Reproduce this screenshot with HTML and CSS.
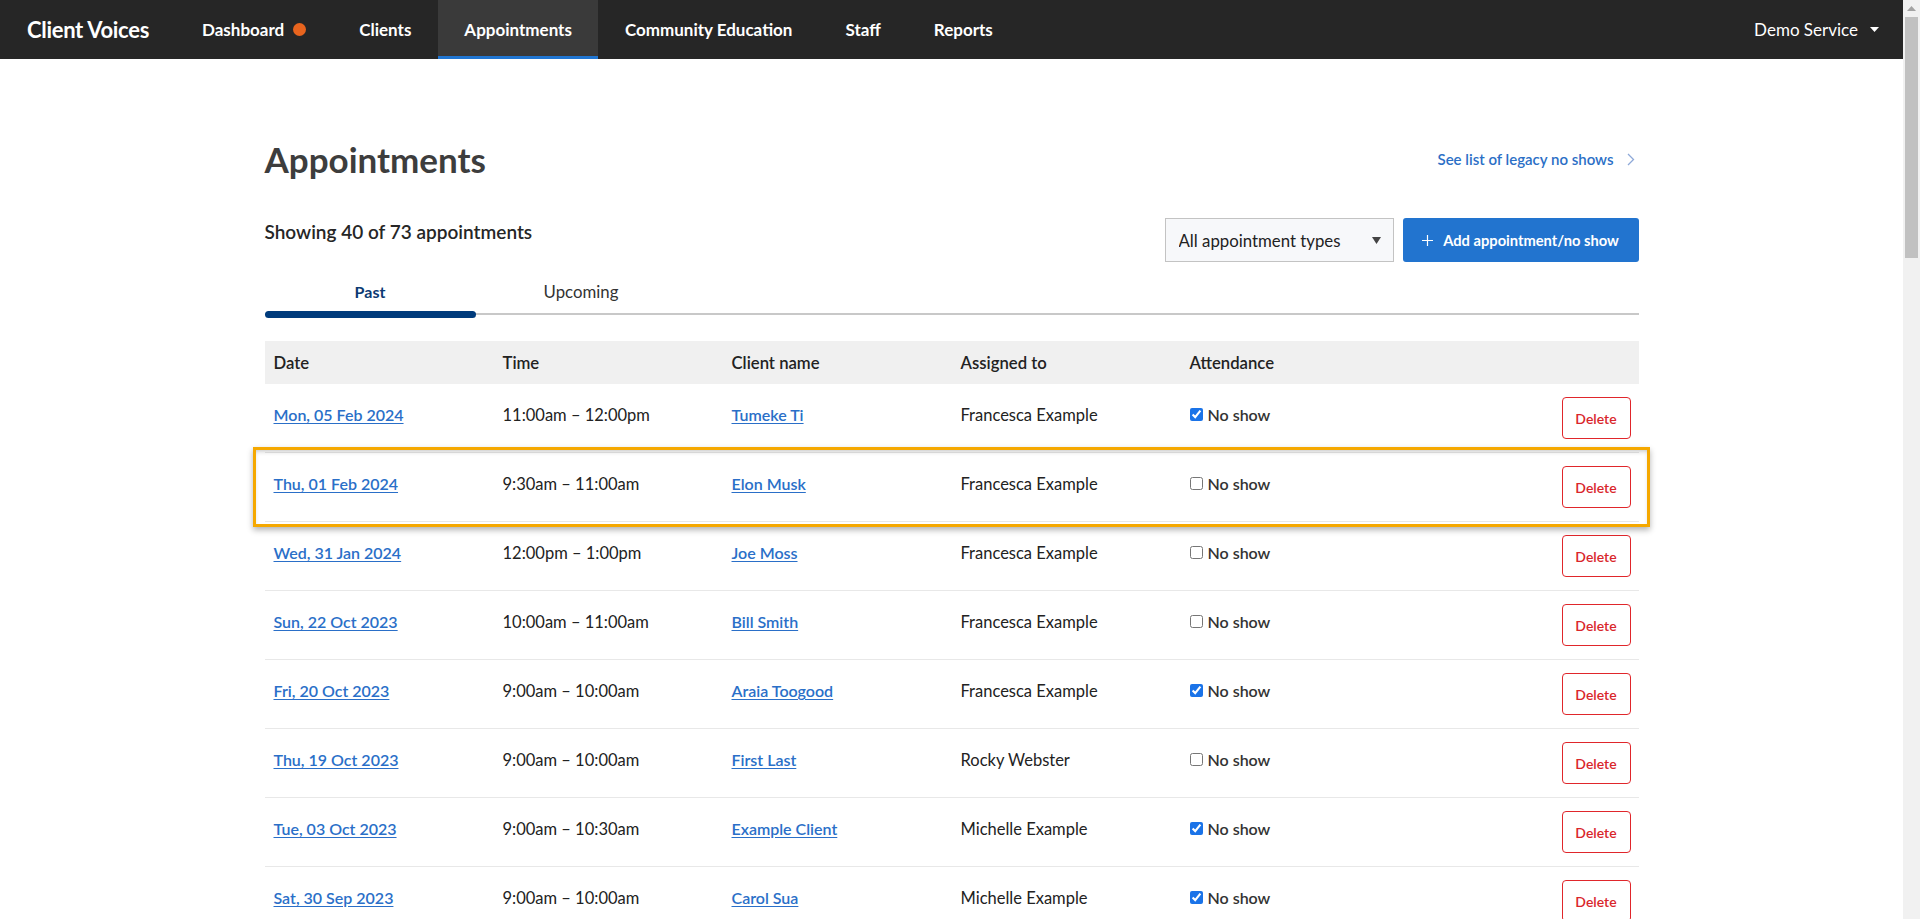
FILE: index.html
```html
<!DOCTYPE html>
<html lang="en">
<head>
<meta charset="utf-8">
<title>Appointments - Client Voices</title>
<link rel="stylesheet" href="styles.css">
</head>
<body>
<header class="topnav">
  <a class="brand" href="#">Client Voices</a>
  <nav class="nav-items">
    <a class="nav-item" href="#">Dashboard <span class="dot"></span></a>
    <a class="nav-item" href="#">Clients</a>
    <a class="nav-item active" href="#">Appointments</a>
    <a class="nav-item" href="#">Community Education</a>
    <a class="nav-item" href="#">Staff</a>
    <a class="nav-item" href="#">Reports</a>
  </nav>
  <a class="account" href="#">Demo Service
    <svg class="caret" width="9" height="5" viewBox="0 0 9 5"><path d="M0 0h9L4.5 5z" fill="#fff"/></svg>
  </a>
</header>

<main class="page">
  <div class="page-head">
    <h1>Appointments</h1>
    <a class="legacy-link" href="#">See list of legacy no shows
      <svg class="chev" width="8" height="13" viewBox="0 0 8 13"><path d="M1 1l5.5 5.5L1 12" fill="none" stroke="#8ea9d8" stroke-width="1.3"/></svg>
    </a>
  </div>

  <div class="toolbar">
    <p class="count">Showing 40 of 73 appointments</p>
    <div class="actions">
      <div class="select-wrap">
        <select class="type-select">
          <option>All appointment types</option>
        </select>
        <svg class="select-arrow" width="9" height="7" viewBox="0 0 9 7"><path d="M0 0h9L4.5 7z" fill="#444"/></svg>
      </div>
      <button class="btn-primary" type="button">
        <svg width="11" height="11" viewBox="0 0 11 11"><path d="M5.5 0v11M0 5.5h11" stroke="#fff" stroke-width="1.2"/></svg>
        Add appointment/no show
      </button>
    </div>
  </div>

  <div class="tabs">
    <a class="tab active" href="#">Past</a>
    <a class="tab" href="#">Upcoming</a>
  </div>

  <div class="table-wrap">
    <table class="appts">
      <thead>
        <tr><th>Date</th><th>Time</th><th>Client name</th><th>Assigned to</th><th>Attendance</th><th></th></tr>
      </thead>
      <tbody>
        <tr><td class="t"><a href="#">Mon, 05 Feb 2024</a></td><td class="t">11:00am – 12:00pm</td><td class="t"><a href="#">Tumeke Ti</a></td><td class="t">Francesca Example</td><td class="t"><label class="ns"><input type="checkbox" checked> No show</label></td><td class="act"><button class="btn-del" type="button">Delete</button></td></tr>
        <tr><td class="t"><a href="#">Thu, 01 Feb 2024</a></td><td class="t">9:30am – 11:00am</td><td class="t"><a href="#">Elon Musk</a></td><td class="t">Francesca Example</td><td class="t"><label class="ns"><input type="checkbox"> No show</label></td><td class="act"><button class="btn-del" type="button">Delete</button></td></tr>
        <tr><td class="t"><a href="#">Wed, 31 Jan 2024</a></td><td class="t">12:00pm – 1:00pm</td><td class="t"><a href="#">Joe Moss</a></td><td class="t">Francesca Example</td><td class="t"><label class="ns"><input type="checkbox"> No show</label></td><td class="act"><button class="btn-del" type="button">Delete</button></td></tr>
        <tr><td class="t"><a href="#">Sun, 22 Oct 2023</a></td><td class="t">10:00am – 11:00am</td><td class="t"><a href="#">Bill Smith</a></td><td class="t">Francesca Example</td><td class="t"><label class="ns"><input type="checkbox"> No show</label></td><td class="act"><button class="btn-del" type="button">Delete</button></td></tr>
        <tr><td class="t"><a href="#">Fri, 20 Oct 2023</a></td><td class="t">9:00am – 10:00am</td><td class="t"><a href="#">Araia Toogood</a></td><td class="t">Francesca Example</td><td class="t"><label class="ns"><input type="checkbox" checked> No show</label></td><td class="act"><button class="btn-del" type="button">Delete</button></td></tr>
        <tr><td class="t"><a href="#">Thu, 19 Oct 2023</a></td><td class="t">9:00am – 10:00am</td><td class="t"><a href="#">First Last</a></td><td class="t">Rocky Webster</td><td class="t"><label class="ns"><input type="checkbox"> No show</label></td><td class="act"><button class="btn-del" type="button">Delete</button></td></tr>
        <tr><td class="t"><a href="#">Tue, 03 Oct 2023</a></td><td class="t">9:00am – 10:30am</td><td class="t"><a href="#">Example Client</a></td><td class="t">Michelle Example</td><td class="t"><label class="ns"><input type="checkbox" checked> No show</label></td><td class="act"><button class="btn-del" type="button">Delete</button></td></tr>
        <tr><td class="t"><a href="#">Sat, 30 Sep 2023</a></td><td class="t">9:00am – 10:00am</td><td class="t"><a href="#">Carol Sua</a></td><td class="t">Michelle Example</td><td class="t"><label class="ns"><input type="checkbox" checked> No show</label></td><td class="act"><button class="btn-del" type="button">Delete</button></td></tr>
      </tbody>
    </table>
    <div class="row-highlight"></div>
  </div>
</main>

<div class="scrollbar" aria-hidden="true">
  <div class="sb-btn"><svg width="9" height="5" viewBox="0 0 9 5"><path d="M0 5L4.5 0 9 5z" fill="#a3a3a3"/></svg></div>
  <div class="sb-thumb"></div>
</div>
</body>
</html>
```

FILE: styles.css
```css
html, body {
  margin: 0;
  padding: 0;
}
body {
  font-family: Lato, "Liberation Sans", sans-serif;
  color: #222;
  background: #fff;
  padding-right: 17px;
  height: 919px;
  overflow: hidden;
}
a { text-decoration: none; }

/* Fake classic scrollbar (browser chrome in the reference) */
.scrollbar {
  position: fixed;
  top: 0;
  right: 0;
  bottom: 0;
  width: 17px;
  background: #f1f1f1;
  display: flex;
  flex-direction: column;
}
.sb-btn {
  height: 17px;
  display: flex;
  align-items: center;
  justify-content: center;
}
.sb-thumb {
  height: 241px;
  margin: 0 2px;
  background: #c1c1c1;
}

/* Top navigation */
.topnav {
  display: flex;
  align-items: stretch;
  height: 59px;
  background: #262626;
  padding-left: 27px;
  padding-right: 24px;
}
.brand {
  display: flex;
  align-items: center;
  color: #fff;
  font-size: 22px;
  font-weight: 700;
  margin-right: 27px;
  letter-spacing: -0.3px;
}
.nav-items {
  display: flex;
  align-items: stretch;
}
.nav-item {
  display: flex;
  align-items: center;
  padding: 3px 26.5px 0;
  color: #fff;
  font-size: 17px;
  font-weight: 700;
  box-sizing: border-box;
  border-bottom: 3px solid transparent;
}
.nav-item:first-child { padding-left: 26px; }
.nav-item.active {
  background: #3a3a3a;
  border-bottom-color: #2176d2;
}
.dot {
  display: inline-block;
  width: 13px;
  height: 13px;
  border-radius: 50%;
  background: #e8641e;
  margin-left: 9px;
}
.account {
  margin-left: auto;
  display: flex;
  align-items: center;
  color: #fff;
  font-size: 17px;
}
.caret { margin-left: 12px; }

/* Page */
.page {
  width: 1374px;
  margin: 0 auto;
  padding-top: 78px;
  padding-bottom: 100px;
}
.page-head {
  display: flex;
  justify-content: space-between;
  align-items: center;
}
h1 {
  margin: 0;
  font-size: 35px;
  line-height: 44px;
  font-weight: 700;
  color: #3d3d3d;
}
.legacy-link {
  display: flex;
  align-items: center;
  gap: 13px;
  color: #2b6fc6;
  font-size: 15px;
  font-weight: 600;
  margin-right: 4px;
}
.toolbar {
  display: flex;
  justify-content: space-between;
  align-items: flex-start;
  margin-top: 37px;
}
.count {
  margin: 2px 0 0;
  font-size: 19px;
  line-height: 24px;
  font-weight: 600;
  color: #262626;
}
.actions {
  display: flex;
  gap: 9px;
}
.select-wrap {
  position: relative;
}
.type-select {
  -webkit-appearance: none;
  appearance: none;
  width: 229px;
  height: 44px;
  box-sizing: border-box;
  border: 1px solid #c3c3c3;
  border-radius: 0;
  background: #f7f8fa;
  padding: 0 30px 0 13px;
  font-family: Lato, "Liberation Sans", sans-serif;
  font-size: 16.8px;
  color: #222;
}
.select-arrow {
  position: absolute;
  right: 13px;
  top: 19px;
  pointer-events: none;
}
.btn-primary {
  display: flex;
  align-items: center;
  gap: 10px;
  height: 44px;
  width: 236px;
  justify-content: center;
  border: 0;
  border-radius: 3px;
  background: #2274cf;
  color: #fff;
  font-family: Lato, "Liberation Sans", sans-serif;
  font-size: 14.7px;
  font-weight: 700;
}

/* Tabs */
.tabs {
  display: flex;
  margin-top: 18px;
  border-bottom: 2px solid #c8c8c8;
}
.tab {
  position: relative;
  width: 211px;
  text-align: center;
  font-size: 16.8px;
  line-height: 22px;
  padding: 1px 0 10px;
  color: #333;
}
.tab.active {
  color: #0c3a73;
  font-weight: 700;
  font-size: 16px;
}
.tab.active::after {
  content: "";
  position: absolute;
  left: 0;
  right: 0;
  bottom: -5px;
  height: 7px;
  border-radius: 4px;
  background: #003b7c;
}

/* Table */
.table-wrap {
  position: relative;
  margin-top: 26px;
}
.appts {
  width: 100%;
  table-layout: fixed;
  border-collapse: separate;
  border-spacing: 0;
}
.appts th {
  height: 43px;
  padding: 0 9px;
  background: #f0f0f0;
  text-align: left;
  font-size: 16.7px;
  font-weight: 600;
  color: #222;
  vertical-align: middle;
}
.appts td {
  border-bottom: 1px solid #e8e8e8;
  padding: 0 9px;
  font-size: 16.5px;
  color: #222;
  vertical-align: middle;
}
.appts td.t {
  height: 62px;
  padding-bottom: 6px;
}
.appts td.act {
  height: 68px;
  text-align: right;
  padding-right: 8px;
}
.appts td a {
  color: #2a6fc8;
  font-weight: 600;
  font-size: 16px;
  text-decoration: underline;
  text-underline-offset: 2px;
}
.ns {
  display: inline-flex;
  align-items: center;
  font-weight: 600;
  font-size: 16px;
  color: #333;
}
.ns input {
  margin: 0 5px 0 0;
  width: 13px;
  height: 13px;
  accent-color: #1a73e8;
}
.btn-del {
  width: 69px;
  height: 42px;
  border: 1px solid #e0262b;
  border-radius: 4px;
  background: #fff;
  color: #d9262b;
  font-family: Lato, "Liberation Sans", sans-serif;
  font-size: 14px;
  font-weight: 600;
}
.row-highlight {
  position: absolute;
  left: -12px;
  right: -11px;
  top: 106px;
  height: 80px;
  box-sizing: border-box;
  border: 3px solid #f5a800;
  box-shadow: 0 3px 6px rgba(0,0,0,0.3), inset 0 3px 5px -2px rgba(0,0,0,0.25);
  pointer-events: none;
}
```
